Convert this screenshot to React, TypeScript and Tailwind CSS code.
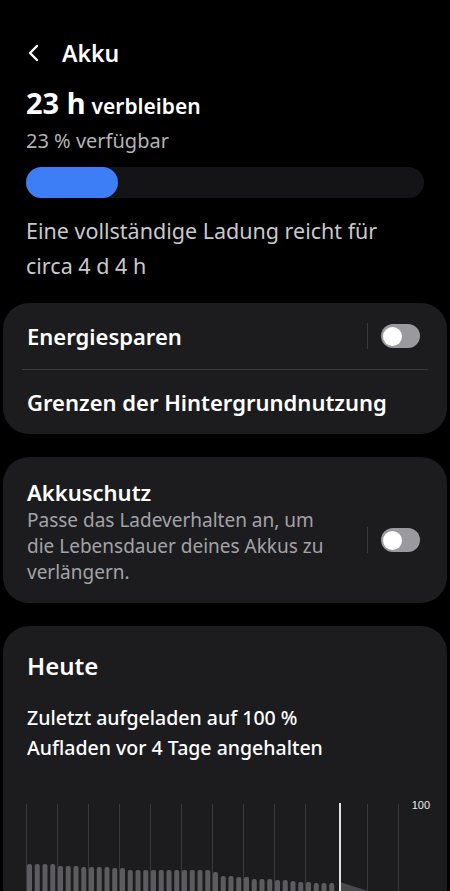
import React from 'react';

// Oberkanten der Balken (Seitenkoordinaten, y)
const barTops = [
  864, 864, 864, 864, 866, 866, 866, 867, 867, 867, 867, 868, 868, 870, 870, 870, 870, 870, 870, 870,
  870, 870, 870, 870, 872, 876, 876, 877, 877, 879, 879, 879, 880, 880, 881, 882, 882, 883, 883, 883,
];

const gridLines = [26, 57, 88, 119, 150, 181, 212, 243, 274, 305, 367, 398];

const Toggle: React.FC = () => (
  <div className="flex items-center">
    <div className="w-px h-[26px] bg-[#3a3a3c] mr-[13px]" />
    <div className="w-[39px] h-[24px] rounded-full bg-[#9a9a9e] flex items-center px-[2px]">
      <div className="w-[19px] h-[19px] rounded-full bg-white" />
    </div>
  </div>
);

const UsageChart: React.FC = () => {
  // svg liegt bei x=3 der Seite, Koordinaten in Seitenwerten minus Offset
  const ox = 3;
  const oy = 790;
  return (
    <svg width="444" height="101" viewBox="0 0 444 101" className="block">
      {gridLines.map((x) => (
        <line key={x} x1={x - ox + 0.5} y1={804 - oy} x2={x - ox + 0.5} y2={101} stroke="#3a3a3c" strokeWidth="1" />
      ))}
      {barTops.map((top, i) => {
        const x = 27 + i * 7.75;
        return (
          <rect key={i} x={x - ox} y={top - oy} width="5" height={120} rx="2" fill="#5c5c60" />
        );
      })}
      <polygon points={`${340 - ox},${882 - oy} ${368 - ox},${891 - oy} ${340 - ox},${891 - oy}`} fill="#4a4a4e" />
      <line x1={340 - ox} y1={803 - oy} x2={340 - ox} y2={101} stroke="#e0e0e0" strokeWidth="2" />
      <text x={430 - ox} y={809 - oy} textAnchor="end" fill="#ededed" fontSize="11" fontFamily="Liberation Sans, Arial, sans-serif">
        100
      </text>
    </svg>
  );
};

const App: React.FC = () => {
  return (
    <div className="w-[450px] h-[891px] overflow-hidden bg-black text-white font-['Noto_Sans',sans-serif]">
      {/* Kopfzeile */}
      <div className="flex items-center h-[40px] mt-[33px] pl-[26px]">
        <svg width="16" height="20" viewBox="0 0 16 20" className="mr-[20px]">
          <path d="M11 3 L4 10 L11 17" stroke="white" strokeWidth="2.4" fill="none" strokeLinecap="round" strokeLinejoin="round" />
        </svg>
        <span className="text-[23px] font-semibold leading-none">Akku</span>
      </div>

      {/* Restlaufzeit */}
      <div className="px-[26px] mt-[15px]">
        <div className="flex items-baseline h-[40px]">
          <span className="text-[29px] font-bold leading-none">23 h</span>
          <span className="text-[21px] font-semibold leading-none ml-[6px]">verbleiben</span>
        </div>
        <div className="text-[20px] text-[#b3b3b6] leading-[26px]">23 % verfügbar</div>
        <div className="mt-[13px] h-[31px] w-[398px] rounded-full bg-[#141416]">
          <div className="h-full w-[92px] rounded-full bg-[#3d7ef6]" />
        </div>
        <div className="mt-[15px] text-[21.5px] text-[#c9c9cc] leading-[35px]">
          Eine vollständige Ladung reicht für
          <br />
          circa 4 d 4 h
        </div>
      </div>

      {/* Energiesparen */}
      <div className="mx-[3px] mt-[20px] rounded-[26px] bg-[#1c1c1e]">
        <div className="flex items-center justify-between h-[66px] pl-[24px] pr-[27px]">
          <span className="text-[22px] font-semibold">Energiesparen</span>
          <Toggle />
        </div>
        <div className="mx-[19px] h-px bg-[#38383a]" />
        <div className="flex items-center h-[64px] pl-[24px]">
          <span className="text-[22px] font-semibold">Grenzen der Hintergrundnutzung</span>
        </div>
      </div>

      {/* Akkuschutz */}
      <div className="mx-[3px] mt-[23px] rounded-[26px] bg-[#1c1c1e] pl-[24px] pr-[27px] pt-[20px] pb-[18px]">
        <div className="text-[22px] font-semibold leading-[30px]">Akkuschutz</div>
        <div className="flex items-center justify-between">
          <div className="w-[312px] text-[19px] text-[#a3a3a7] leading-[26px]">
            Passe das Ladeverhalten an, um die Lebensdauer deines Akkus zu verlängern.
          </div>
          <div className="-mt-[12px]">
            <Toggle />
          </div>
        </div>
      </div>

      {/* Heute */}
      <div className="mx-[3px] mt-[23px] rounded-t-[26px] bg-[#1c1c1e] pt-[23px]">
        <div className="pl-[24px] text-[24px] font-semibold leading-[34px]">Heute</div>
        <div className="pl-[24px] mt-[20px] text-[19.5px] font-medium leading-[30px]">
          Zuletzt aufgeladen auf 100 %
          <br />
          Aufladen vor 4 Tage angehalten
        </div>
        <div className="mt-[27px]">
          <UsageChart />
        </div>
      </div>
    </div>
  );
};

export default App;
